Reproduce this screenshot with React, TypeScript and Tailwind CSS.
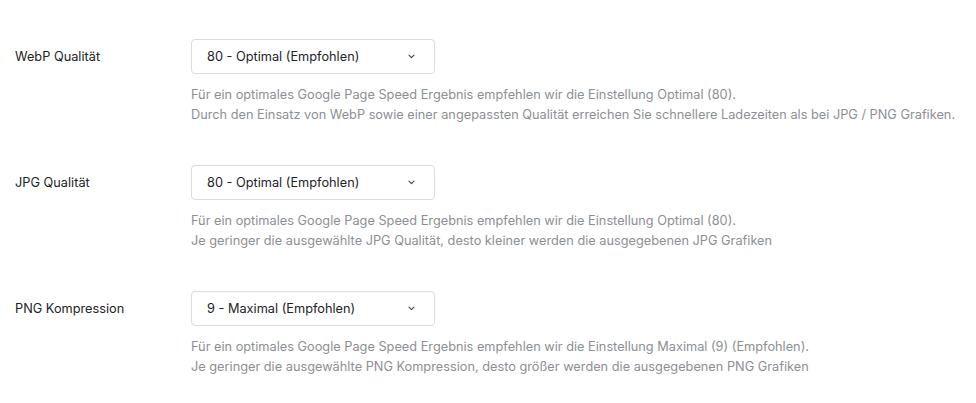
import React from "react";

const rows = [
  {
    label: "WebP Qualität",
    value: "80 - Optimal (Empfohlen)",
    help: [
      "Für ein optimales Google Page Speed Ergebnis empfehlen wir die Einstellung Optimal (80).",
      "Durch den Einsatz von WebP sowie einer angepassten Qualität erreichen Sie schnellere Ladezeiten als bei JPG / PNG Grafiken.",
    ],
  },
  {
    label: "JPG Qualität",
    value: "80 - Optimal (Empfohlen)",
    help: [
      "Für ein optimales Google Page Speed Ergebnis empfehlen wir die Einstellung Optimal (80).",
      "Je geringer die ausgewählte JPG Qualität, desto kleiner werden die ausgegebenen JPG Grafiken",
    ],
  },
  {
    label: "PNG Kompression",
    value: "9 - Maximal (Empfohlen)",
    help: [
      "Für ein optimales Google Page Speed Ergebnis empfehlen wir die Einstellung Maximal (9) (Empfohlen).",
      "Je geringer die ausgewählte PNG Kompression, desto größer werden die ausgegebenen PNG Grafiken",
    ],
  },
];

export default function App() {
  return (
    <div className="w-[976px] h-[403px] bg-white pt-[39px] pl-[15px] font-['Inter',sans-serif] text-[12.75px] text-[#1d2327]">
      <div className="flex flex-col gap-[40px]">
        {rows.map((r) => (
          <div key={r.label} className="flex">
            <div className="w-[176px] h-[35px] flex items-center">{r.label}</div>
            <div className="flex flex-col">
              <div className="w-[244px] h-[35px] border border-[#dcdcde] rounded-[4px] flex items-center justify-between pl-[15px] pr-[19px]">
                <span>{r.value}</span>
                <svg width="7" height="5" viewBox="0 0 7 5" fill="none">
                  <path d="M1 1.2 L3.5 3.6 L6 1.2" stroke="#3c434a" strokeWidth="1.1" strokeLinecap="round" strokeLinejoin="round" />
                </svg>
              </div>
              <div className="mt-[11px] leading-[20px] text-[#8c8f94]">
                {r.help.map((h) => (
                  <div key={h}>{h}</div>
                ))}
              </div>
            </div>
          </div>
        ))}
      </div>
    </div>
  );
}
